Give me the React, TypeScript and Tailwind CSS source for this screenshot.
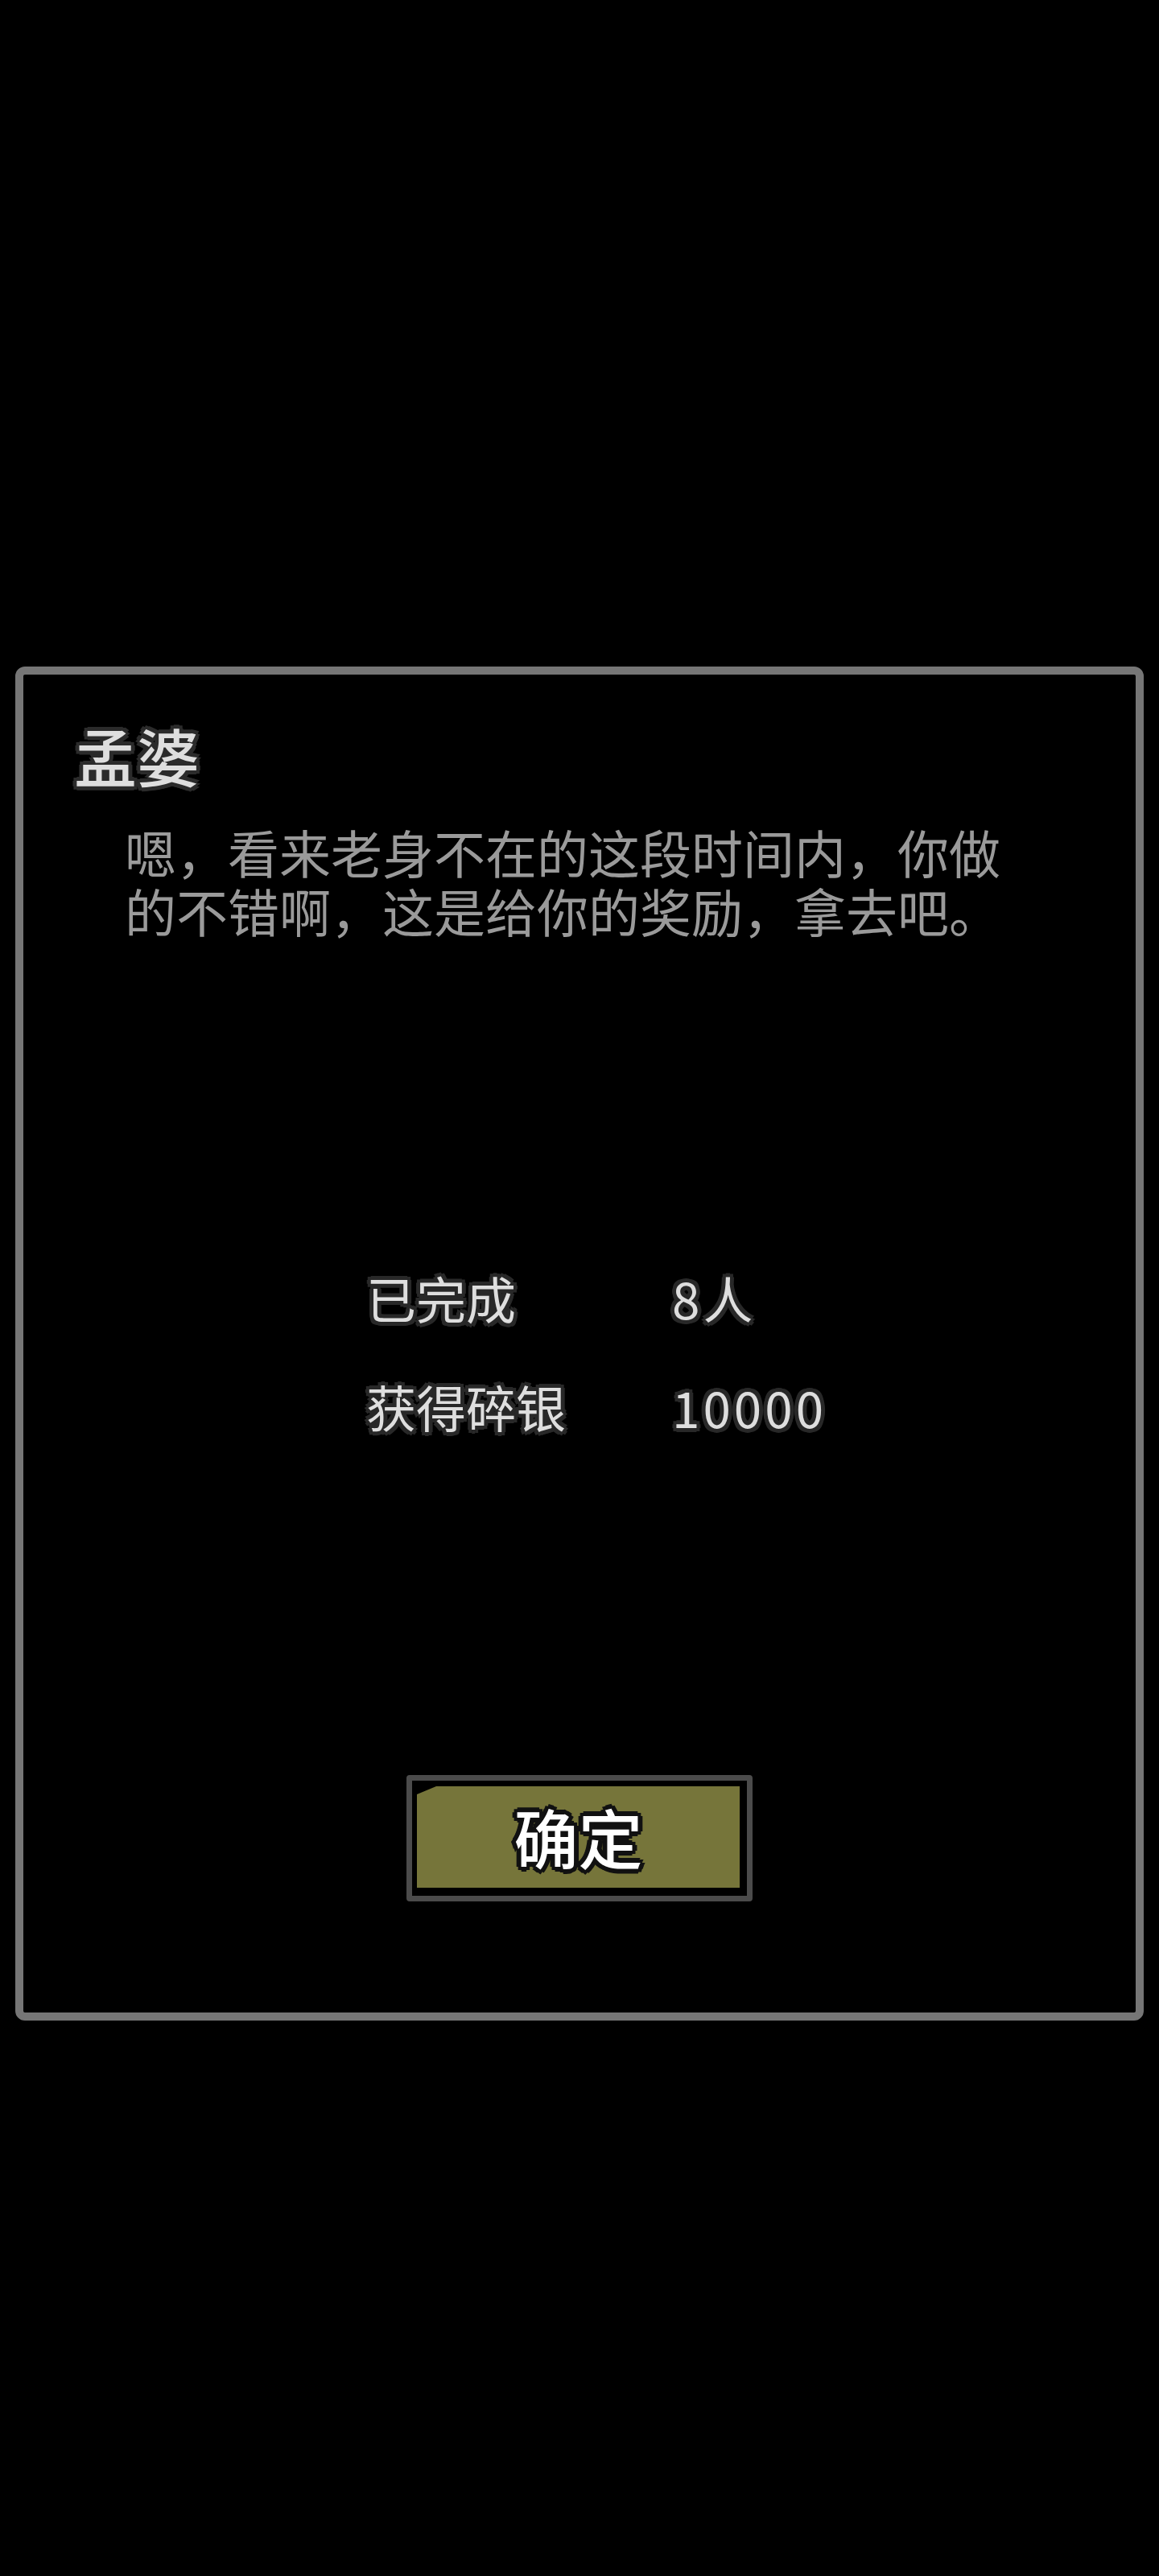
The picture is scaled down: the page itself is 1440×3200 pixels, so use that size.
import React from 'react';

const font = "font-['Noto_Sans_CJK_SC','Noto_Sans',sans-serif]";

const StatRow: React.FC<{ label: string; value: string }> = ({ label, value }) => (
  <>
    <div className="text-[62px] leading-[70px] text-[#dedede] [text-shadow:5px_0_0_#282828,-5px_0_0_#282828,0_5px_0_#282828,0_-5px_0_#282828,4px_4px_0_#282828,-4px_4px_0_#282828,4px_-4px_0_#282828,-4px_-4px_0_#282828]">
      {label}
    </div>
    <div className="text-[62px] leading-[70px] tracking-[4px] text-[#dedede] [text-shadow:5px_0_0_#282828,-5px_0_0_#282828,0_5px_0_#282828,0_-5px_0_#282828,4px_4px_0_#282828,-4px_4px_0_#282828,4px_-4px_0_#282828,-4px_-4px_0_#282828]">
      {value}
    </div>
  </>
);

const App: React.FC = () => {
  return (
    <div className={`min-h-[3200px] bg-black px-[19px] pt-[828px] ${font}`}>
      <div className="box-border h-[1682px] rounded-[12px] border-[10px] border-[#767676] pt-[61px]">
        <h1 className="ml-[63px] text-[78px] font-medium leading-[78px] text-[#dedede] [text-shadow:5px_0_0_#2b2b2b,-5px_0_0_#2b2b2b,0_5px_0_#2b2b2b,0_-5px_0_#2b2b2b,4px_4px_0_#2b2b2b,-4px_4px_0_#2b2b2b,4px_-4px_0_#2b2b2b,-4px_-4px_0_#2b2b2b]">
          孟婆
        </h1>

        <p className="ml-[126px] mt-[44px] w-[1110px] text-[64px] leading-[73px] text-[#9a9a9a]">
          嗯，看来老身不在的这段时间内，你做的不错啊，这是给你的奖励，拿去吧。
        </p>

        <div className="ml-[426px] mt-[410px] grid grid-cols-[380px_auto] gap-y-[65px]">
          <StatRow label="已完成" value="8人" />
          <StatRow label="获得碎银" value="10000" />
        </div>

        <button className="mx-auto mt-[423px] box-border block h-[157px] w-[430px] rounded-[4px] border-[7px] border-[#4b4b4b] bg-black pb-[10px] pl-[6px] pr-[9px] pt-[7px]">
          <div className="flex h-full w-full items-center justify-center bg-[#76753a] [clip-path:polygon(24px_0,100%_0,100%_100%,0_100%,0_10px)]">
            <span className="pb-[4px] text-[80px] font-medium leading-none text-white [text-shadow:6px_0_0_#111,-6px_0_0_#111,0_6px_0_#111,0_-6px_0_#111,4px_4px_0_#111,-4px_4px_0_#111,4px_-4px_0_#111,-4px_-4px_0_#111]">
              确定
            </span>
          </div>
        </button>
      </div>
    </div>
  );
};

export default App;
